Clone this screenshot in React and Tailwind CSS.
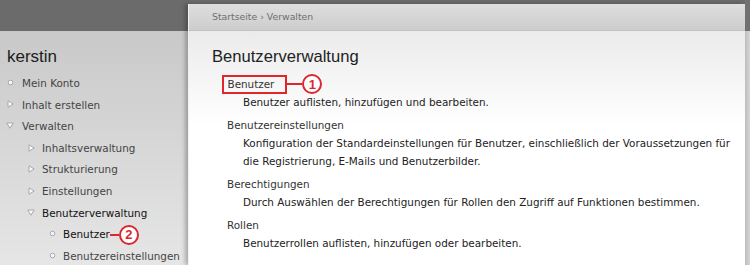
const SIDE = [
    { label: 'Mein Konto', level: 0, kind: 'leaf' },
    { label: 'Inhalt erstellen', level: 0, kind: 'closed' },
    { label: 'Verwalten', level: 0, kind: 'open' },
    { label: 'Inhaltsverwaltung', level: 1, kind: 'closed' },
    { label: 'Strukturierung', level: 1, kind: 'closed' },
    { label: 'Einstellungen', level: 1, kind: 'closed' },
    { label: 'Benutzerverwaltung', level: 1, kind: 'open', active: true },
    { label: 'Benutzer', level: 2, kind: 'leaf', active: true, marker: '2' },
    { label: 'Benutzereinstellungen', level: 2, kind: 'leaf' },
];

const ITEMS = [
    { title: 'Benutzer', desc: ['Benutzer auflisten, hinzufügen und bearbeiten.'], marker: '1' },
    {
        title: 'Benutzereinstellungen',
        desc: [
            'Konfiguration der Standardeinstellungen für Benutzer, einschließlich der Voraussetzungen für',
            'die Registrierung, E-Mails und Benutzerbilder.',
        ],
    },
    { title: 'Berechtigungen', desc: ['Durch Auswählen der Berechtigungen für Rollen den Zugriff auf Funktionen bestimmen.'] },
    { title: 'Rollen', desc: ['Benutzerrollen auflisten, hinzufügen oder bearbeiten.'] },
];

const INDENT = { 0: 'pl-[6px]', 1: 'pl-[27px]', 2: 'pl-[48px]' };
const GAP = { 0: 'w-[8px]', 1: 'w-[7px]', 2: 'w-[7px]' };

function Bullet({ kind }) {
    if (kind === 'leaf') {
        return (
            <svg width="7" height="7" viewBox="0 0 7 7" className="-mt-[3px]">
                <circle cx="3.5" cy="3.5" r="2.3" fill="#f6f6f6" stroke="#a8a8a8" strokeWidth="1" />
            </svg>
        );
    }
    if (kind === 'closed') {
        return (
            <svg width="7" height="8" viewBox="0 0 7 8" className="-mt-[2px]">
                <polygon points="1,0.8 6.2,4 1,7.2" fill="#fafafa" stroke="#a8a8a8" strokeWidth="1" strokeLinejoin="round" />
            </svg>
        );
    }
    return (
        <svg width="8" height="7" viewBox="0 0 8 7" className="-mt-[2px]">
            <polygon points="0.8,1 7.2,1 4,6.2" fill="#fafafa" stroke="#a8a8a8" strokeWidth="1" strokeLinejoin="round" />
        </svg>
    );
}

function Marker({ n, line }) {
    return (
        <span className="flex items-center">
            <span className={`${line} h-[2px] bg-[#d9282f]`} />
            <span className="w-[20px] h-[20px] rounded-full border-2 border-[#d9282f] bg-white flex items-center justify-center text-[#d9282f] text-[13px] font-bold leading-none font-['Liberation_Sans',Arial,sans-serif]">
                {n}
            </span>
        </span>
    );
}

export default function App() {
    return (
        <div className="w-[750px] h-[265px] overflow-hidden flex bg-[#6b6b6b] font-['DejaVu_Sans',Verdana,sans-serif]">
            {/* sidebar */}
            <div className="w-[188px] shrink-0 flex flex-col">
                <div className="h-[31px] shrink-0 bg-[#6b6b6b]" />
                <div className="flex-1 bg-[linear-gradient(#c9c9c9,#e6e6e6)] pt-[16px]">
                    <div className="pl-[7px] text-[17px] leading-[20px] text-[#1c1c1c] font-['Liberation_Sans',Arial,sans-serif]">kerstin</div>
                    <ul className="mt-[6px]">
                        {SIDE.map((s) => (
                            <li key={s.label} className={`h-[21.6px] flex items-center ${INDENT[s.level]} text-[10.4px] ${s.active ? 'text-[#111]' : 'text-[#444]'}`}>
                                <span className="w-[8px] flex justify-center">
                                    <Bullet kind={s.kind} />
                                </span>
                                <span className={GAP[s.level]} />
                                <span className="whitespace-nowrap">{s.label}</span>
                                {s.marker && <Marker n={s.marker} line="w-[9px]" />}
                            </li>
                        ))}
                    </ul>
                </div>
            </div>

            {/* main panel */}
            <div className="w-[557px] shrink-0 pt-[4px] flex flex-col">
                <div className="flex-1 flex flex-col shadow-[-3px_0_4px_rgba(0,0,0,0.25)] border-l border-[#f2f2f2]">
                    <div className="h-[27px] shrink-0 flex items-center pl-[23px] bg-[linear-gradient(#dedede,#cdcdcd)] border-b border-[#c2c2c2] text-[9.3px] text-[#6f6f6f]">
                        Startseite › Verwalten
                    </div>
                    <div className="flex-1 bg-[linear-gradient(#ebebeb,#ffffff_95px)] pl-[23px] pt-[15px]">
                        <h1 className="text-[16.6px] leading-[22px] text-[#222] font-['Liberation_Sans',Arial,sans-serif]">Benutzerverwaltung</h1>
                        <dl className="mt-[7px] text-[10.4px] leading-[18px] text-[#333]">
                            {ITEMS.map((it) => (
                                <div key={it.title} className="mb-[5px]">
                                    <dt className="pl-[15px] h-[18px] flex items-center">
                                        {it.marker ? (
                                            <>
                                                <span className="-ml-[5.5px] h-[19px] border-2 border-solid border-[#e0262b] pl-[4px] pr-[11px] flex items-center">{it.title}</span>
                                                <Marker n={it.marker} line="w-[15px]" />
                                            </>
                                        ) : (
                                            it.title
                                        )}
                                    </dt>
                                    {it.desc.map((d) => (
                                        <dd key={d} className="pl-[31px] text-[#222]">{d}</dd>
                                    ))}
                                </div>
                            ))}
                        </dl>
                    </div>
                </div>
            </div>

            {/* right edge */}
            <div className="flex-1 flex flex-col">
                <div className="h-[31px] shrink-0 bg-[#707070]" />
                <div className="flex-1 bg-[linear-gradient(90deg,#bdbdbd,#d6d6d6)]" />
            </div>
        </div>
    );
}
